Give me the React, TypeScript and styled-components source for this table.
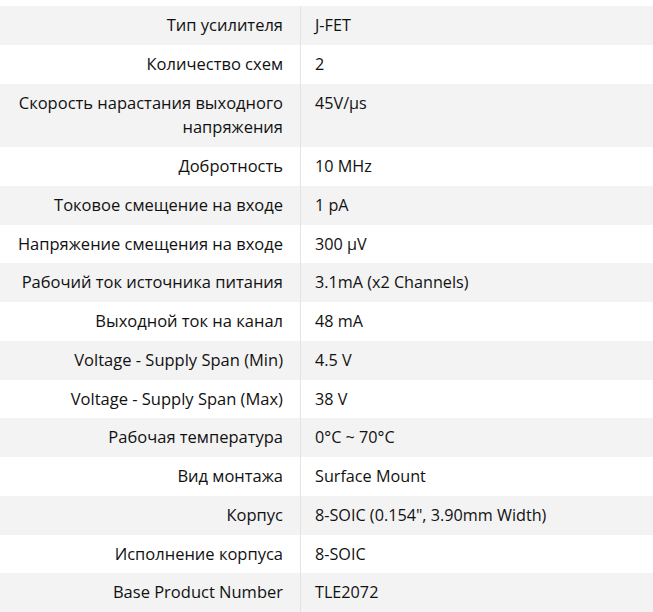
import * as React from 'react';
import styled, { createGlobalStyle } from 'styled-components';

const GlobalStyle = createGlobalStyle`
  html, body {
    margin: 0;
    padding: 0;
    background: #ffffff;
  }
  body {
    font-family: 'Open Sans', 'Noto Sans', sans-serif;
    color: #111111;
  }
`;

const Page = styled.div`
  padding-top: 6px;
  width: 653px;
`;

const SpecTable = styled.div`
  display: flex;
  flex-direction: column;
`;

const Row = styled.div<{ $striped: boolean }>`
  display: grid;
  grid-template-columns: 301px 1fr;
  background: ${(p) => (p.$striped ? '#f3f3f3' : '#ffffff')};
`;

const Label = styled.div`
  padding: 7px 17px 7px 14px;
  text-align: right;
  font-size: 16.5px;
  line-height: 24.75px;
  border-right: 1px solid #e3e3e3;
`;

const Value = styled.div`
  padding: 7px 14px;
  font-size: 16.2px;
  line-height: 24.75px;
`;

const specs: [string, string][] = [
  ['Тип усилителя', 'J-FET'],
  ['Количество схем', '2'],
  ['Скорость нарастания выходного напряжения', '45V/µs'],
  ['Добротность', '10 MHz'],
  ['Токовое смещение на входе', '1 pA'],
  ['Напряжение смещения на входе', '300 µV'],
  ['Рабочий ток источника питания', '3.1mA (x2 Channels)'],
  ['Выходной ток на канал', '48 mA'],
  ['Voltage - Supply Span (Min)', '4.5 V'],
  ['Voltage - Supply Span (Max)', '38 V'],
  ['Рабочая температура', '0°C ~ 70°C'],
  ['Вид монтажа', 'Surface Mount'],
  ['Корпус', '8-SOIC (0.154", 3.90mm Width)'],
  ['Исполнение корпуса', '8-SOIC'],
  ['Base Product Number', 'TLE2072'],
];

export default function App() {
  return (
    <Page>
      <GlobalStyle />
      <SpecTable>
        {specs.map(([label, value], i) => (
          <Row key={label} $striped={i % 2 === 0}>
            <Label>{label}</Label>
            <Value>{value}</Value>
          </Row>
        ))}
      </SpecTable>
    </Page>
  );
}
